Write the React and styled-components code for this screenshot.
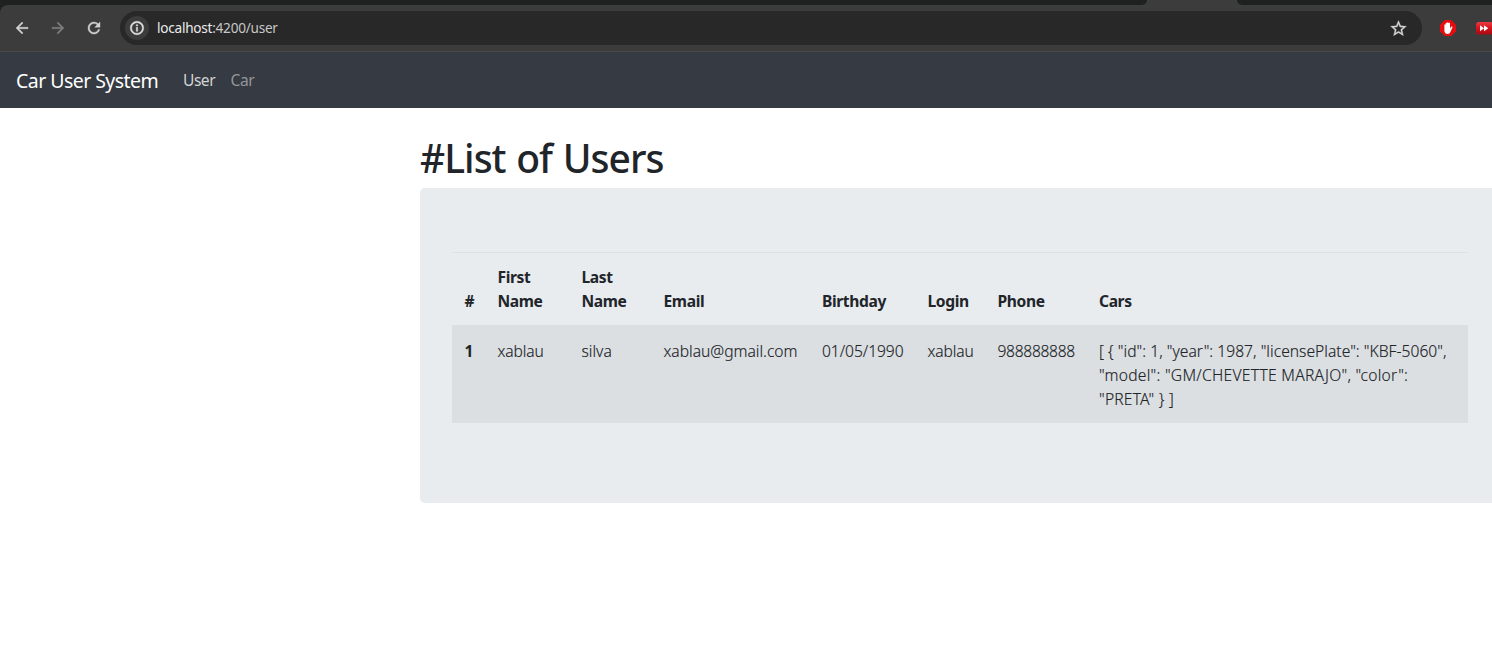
import React from "react";
import styled, { createGlobalStyle } from "styled-components";
import { MdArrowBack, MdArrowForward, MdRefresh, MdStarBorder, MdInfoOutline } from "react-icons/md";

const Base = createGlobalStyle`
  *, *::before, *::after { box-sizing: border-box; }
  body {
    margin: 0;
    overflow: hidden;
    background: #fff;
    color: #212529;
    font-family: "Noto Sans", "Open Sans", sans-serif;
    font-size: 15.6px;
    line-height: 24px;
  }
`;

const Page = styled.div`
  height: 665px;
  overflow: hidden;
`;

const TabStrip = styled.div`
  display: flex;
  height: 5px;
  background: #3c3c3c;
`;

const TabGap = styled.div`
  width: ${(p) => p.$width || "auto"};
  flex: ${(p) => (p.$width ? "none" : 1)};
  background: #1f2121;
  border-radius: ${(p) => p.$radius};
`;

const ActiveTab = styled.div`
  width: 90px;
  background: #3c3c3c;
`;

const ToolbarBack = styled.div`
  background: #1f2121;
`;

const Toolbar = styled.div`
  display: flex;
  align-items: center;
  height: 47px;
  padding: 0 0 0 13px;
  background: #3c3c3c;
  border-bottom: 1px solid #474a49;
  border-top-left-radius: 8px;
`;

const NavButton = styled.span`
  display: flex;
  flex: none;
  justify-content: center;
  width: 18px;
  margin-right: 18px;
  color: ${(p) => (p.$disabled ? "#7d7d7d" : "#d2d2d2")};
  svg { display: block; flex: none; }
  path:not([fill="none"]) { stroke: currentColor; stroke-width: 0.5px; }
`;

const Omnibox = styled.div`
  display: flex;
  align-items: center;
  flex: none;
  width: 1302px;
  height: 34px;
  margin-left: -1px;
  padding: 0 14.5px 0 5px;
  border-radius: 17px;
  background: #282828;
  color: #d5d5d5;
  > svg path:not([fill="none"]) { stroke: currentColor; stroke-width: 0.4px; }
`;

const SiteInfo = styled.span`
  display: flex;
  align-items: center;
  justify-content: center;
  width: 24px;
  height: 24px;
  border-radius: 50%;
  background: #3c3c3c;
  color: #e3e3e3;
  path:not([fill="none"]) { stroke: currentColor; stroke-width: 0.7px; }
`;

const Address = styled.span`
  flex: 1;
  margin-left: 8px;
  font-size: 13.6px;
  letter-spacing: -0.25px;
  color: #c7c7c7;
`;

const Host = styled.span`
  color: #ebebeb;
`;

const Extensions = styled.div`
  display: flex;
  align-items: center;
  flex: none;
  gap: 20px;
  margin-left: 18px;
  svg { display: block; flex: none; }
`;

const Navbar = styled.nav`
  display: flex;
  align-items: center;
  height: 56px;
  padding: 2px 16px 0;
  background: #363a42;
`;

const Brand = styled.span`
  width: 143px;
  margin-right: 24px;
  white-space: nowrap;
  font-size: 19.5px;
  letter-spacing: -0.55px;
  color: #fff;
`;

const NavLink = styled.span`
  margin: 0 15.5px 2px 0;
  letter-spacing: -0.5px;
  color: ${(p) => (p.$active ? "#d2d3d5" : "#949699")};
`;

const Content = styled.main`
  width: 1080px;
  margin: 26px 0 0 420px;
`;

const Title = styled.h1`
  margin: 0 0 6px;
  font-size: 39px;
  font-weight: 500;
  line-height: 48px;
  letter-spacing: -0.97px;
  word-spacing: 1.5px;
`;

const Panel = styled.section`
  height: 315px;
  padding: 64px 32px;
  border-radius: 5px;
  background: #e8ecef;
`;

const Table = styled.table`
  width: 1016px;
  table-layout: fixed;
  border-collapse: separate;
  border-spacing: 0;
`;

const Col = styled.col`
  width: ${(p) => p.$width}px;
`;

const HeadCell = styled.th`
  height: 73px;
  padding: 12px 11px 12px 12.5px;
  border-top: 1px solid #dee1e4;
  vertical-align: bottom;
  text-align: left;
  font-weight: 700;
  letter-spacing: -0.38px;
`;

const Cell = styled.td`
  height: 98px;
  padding: 14px 0 12px 12.5px;
  background: #dcdfe2;
  vertical-align: top;
  font-weight: ${(p) => (p.$strong ? 700 : 300)};
  -webkit-text-stroke: ${(p) => (p.$strong ? 0 : 0.15)}px #212529;
  letter-spacing: ${(p) => p.$tracking || 0}px;
  white-space: nowrap;
`;

const JsonLine = styled.span`
  display: block;
  letter-spacing: ${(p) => p.$tracking}px;
`;

const columns = [
  { width: 33, label: "#" },
  { width: 84, label: "First Name" },
  { width: 82, label: "Last Name" },
  { width: 158.5, label: "Email" },
  { width: 105.5, label: "Birthday" },
  { width: 70, label: "Login" },
  { width: 101.5, label: "Phone" },
  { width: 381.5, label: "Cars" },
];

function BlockerIcon() {
  return (
    <svg width="16" height="16" viewBox="0 0 16 16">
      <path fill="#e40d12" d="M4.7 0h6.6L16 4.7v6.6L11.3 16H4.7L0 11.3V4.7z" />
      <path
        fill="#fff"
        d="M4.400 8.500V5c0-1 1.300-1 1.300 0V3.600c0-1 1.400-1 1.400 0V2.900c0-1 1.500-1 1.500 0v.7c0-1 1.400-1 1.400 0v4.800l1-1.500c.7-.9 1.900-.3 1.400.6l-2 4.600c-.6 1.300-1.300 1.900-2.700 1.900-2.200 0-3.300-1.500-3.300-3.300z"
      />
    </svg>
  );
}

function SkipIcon() {
  return (
    <svg width="17" height="13" viewBox="0 0 17 13">
      <defs>
        <linearGradient id="skip" x1="0" y1="0" x2="0" y2="1">
          <stop offset="0" stopColor="#ef3a40" />
          <stop offset="0.5" stopColor="#d3141d" />
          <stop offset="1" stopColor="#a90811" />
        </linearGradient>
      </defs>
      <rect width="17" height="12.5" rx="3" fill="url(#skip)" />
      <path fill="#fff" d="M4 3.200 8 6.200 4 9.200zM8 3.200 12.300 6.200 8 9.200z" />
    </svg>
  );
}

export default function App() {
  return (
    <Page>
      <Base />
      <TabStrip>
        <TabGap $width="1147px" $radius="0 0 8px 0" />
        <ActiveTab />
        <TabGap $radius="0 0 0 8px" />
      </TabStrip>
      <ToolbarBack>
        <Toolbar>
          <NavButton><MdArrowBack size={18} /></NavButton>
          <NavButton $disabled><MdArrowForward size={18} /></NavButton>
          <NavButton><MdRefresh size={18} /></NavButton>
          <Omnibox>
            <SiteInfo><MdInfoOutline size={16} /></SiteInfo>
            <Address><Host>localhost</Host>:4200/user</Address>
            <MdStarBorder size={19} />
          </Omnibox>
          <Extensions>
            <BlockerIcon />
            <SkipIcon />
          </Extensions>
        </Toolbar>
      </ToolbarBack>
      <Navbar>
        <Brand>Car User System</Brand>
        <NavLink $active>User</NavLink>
        <NavLink>Car</NavLink>
      </Navbar>
      <Content>
        <Title>#List of Users</Title>
        <Panel>
          <Table>
            <colgroup>
              {columns.map((c) => <Col key={c.label} $width={c.width} />)}
            </colgroup>
            <thead>
              <tr>{columns.map((c) => <HeadCell key={c.label}>{c.label}</HeadCell>)}</tr>
            </thead>
            <tbody>
              <tr>
                <Cell $strong>1</Cell>
                <Cell $tracking={-0.1}>xablau</Cell>
                <Cell>silva</Cell>
                <Cell>xablau@gmail.com</Cell>
                <Cell $tracking={-0.05}>01/05/1990</Cell>
                <Cell $tracking={-0.1}>xablau</Cell>
                <Cell $tracking={-0.3}>988888888</Cell>
                <Cell>
                  <JsonLine $tracking={0.03}>{'[ { "id": 1, "year": 1987, "licensePlate": "KBF-5060",'}</JsonLine>
                  <JsonLine $tracking={0.27}>{'"model": "GM/CHEVETTE MARAJO", "color":'}</JsonLine>
                  <JsonLine $tracking={0.2}>{'"PRETA" } ]'}</JsonLine>
                </Cell>
              </tr>
            </tbody>
          </Table>
        </Panel>
      </Content>
    </Page>
  );
}
